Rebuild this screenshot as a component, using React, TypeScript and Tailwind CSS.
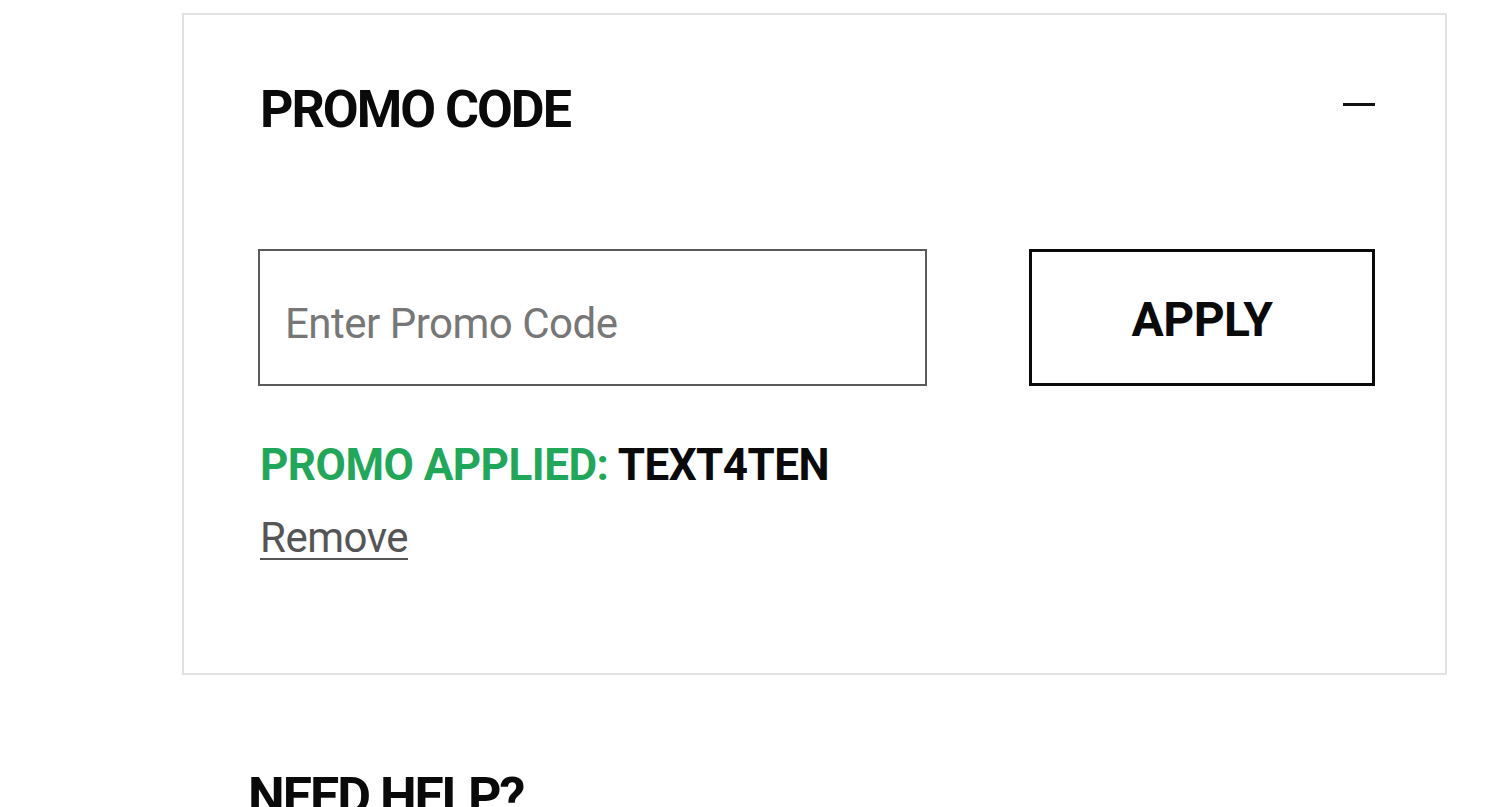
export default function App() {
  return (
    <div className="min-h-screen bg-white pl-[182px] pt-[13px] font-['Roboto',sans-serif] text-[#0a0a0a]">
      <div className="w-[1265px] border-2 border-[#e2e2e2] pb-[114px] pl-[74px] pr-[70px] pt-[69px]">
        <div className="flex items-start justify-between">
          <h2 className="pl-[2px] text-[52px] font-bold leading-[52px] tracking-[-2px]">
            PROMO CODE
          </h2>
          <button type="button" aria-label="Collapse" className="mt-[19px] h-[3px] w-[32px] bg-[#111]" />
        </div>

        <div className="mt-[113px] flex items-stretch justify-between">
          <input
            className="h-[137px] w-[669px] border-2 border-[#5a5a5a] px-[25px] pt-[12px] text-[42px] tracking-[-0.5px] text-[#111] outline-none placeholder:text-[#777]"
            placeholder="Enter Promo Code"
          />
          <button
            type="button"
            className="h-[137px] w-[346px] border-[3px] border-[#0a0a0a] pt-[4px] text-[48px] font-bold tracking-[-0.5px]"
          >
            APPLY
          </button>
        </div>

        <p className="mt-[57px] pl-[2px] text-[44px] font-bold leading-[44px] tracking-[-0.5px]">
          <span className="text-[#1fa85a]">PROMO APPLIED:</span> TEXT4TEN
        </p>

        <button
          type="button"
          className="mt-[30px] block pl-[2px] text-[42px] leading-[42px] tracking-[-0.5px] text-[#555] underline decoration-2 underline-offset-[6px]"
        >
          Remove
        </button>
      </div>

      <h3 className="ml-[66px] mt-[96px] text-[52px] font-bold leading-[52px] tracking-[-2px]">
        NEED HELP?
      </h3>
    </div>
  );
}
